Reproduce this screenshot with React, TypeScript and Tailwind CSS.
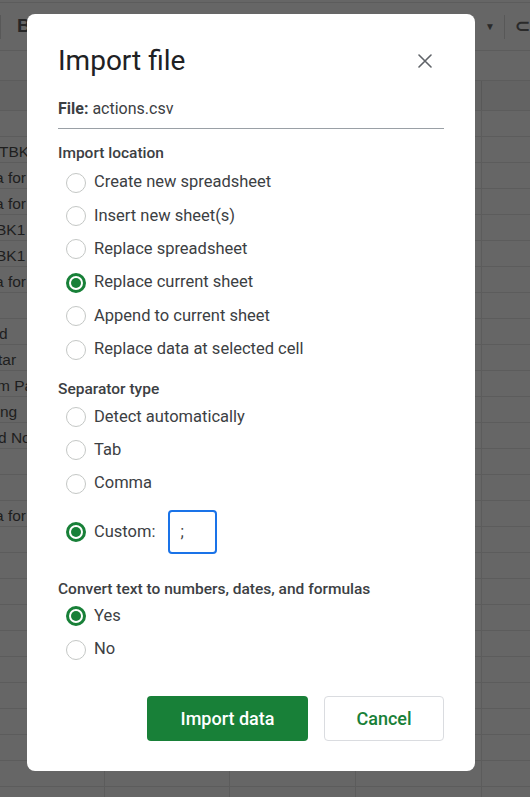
import React from 'react';

const cellRows: { text: string; shift: string }[] = [
  { text: '', shift: '' },
  { text: 'TBK3', shift: '-ml-[1px]' },
  { text: 'a for', shift: '-ml-[5px]' },
  { text: 'a for', shift: '-ml-[5px]' },
  { text: 'BK1', shift: '-ml-[4px]' },
  { text: 'BK1', shift: '-ml-[4px]' },
  { text: 'a for', shift: '-ml-[5px]' },
  { text: '', shift: '' },
  { text: 'd', shift: '-ml-[1px]' },
  { text: 'tar', shift: '-ml-[2px]' },
  { text: 'm Pa', shift: '-ml-[3px]' },
  { text: 'ng', shift: '' },
  { text: 'd No', shift: '-ml-[2px]' },
  { text: '', shift: '' },
  { text: '', shift: '' },
  { text: 'a for', shift: '-ml-[5px]' },
  { text: '', shift: '' },
  { text: '', shift: '' },
  { text: '', shift: '' },
  { text: '', shift: '' },
  { text: '', shift: '' },
  { text: '', shift: '' },
  { text: '', shift: '' },
  { text: '', shift: '' },
  { text: '', shift: '' },
  { text: '', shift: '' },
  { text: '', shift: '' },
];

function SheetBackground() {
  return (
    <div className="flex h-[797px] w-[530px] flex-col overflow-hidden bg-[#666666] font-['Liberation_Sans',Arial,sans-serif] text-[15.5px] text-[#1e1e1e]">
      {/* toolbar */}
      <div className="mt-[2px] flex h-[49px] shrink-0 items-center border-t border-b border-[#5c5c5c]">
        <div className="h-[24px] w-[1px] bg-[#585858]" />
        <span className="ml-[16px] text-[19px] font-bold text-[#262626]">B</span>
        <div className="flex-1" />
        <span className="mr-[2px] text-[16px] text-[#2a2a2a]">)</span>
        <span className="ml-[8px] text-[10px] text-[#2a2a2a]">▼</span>
        <div className="ml-[9px] h-[24px] w-[1px] bg-[#585858]" />
        <span className="ml-[10px] text-[18px] font-bold text-[#2a2a2a]">⊂</span>
      </div>
      {/* formula bar */}
      <div className="h-[30px] shrink-0 border-b border-[#5c5c5c]" />
      {/* column header */}
      <div className="flex h-[30px] shrink-0 border-b border-[#5c5c5c] bg-[#636363]">
        <div className="w-[482px] border-r border-[#585858]" />
      </div>
      {cellRows.map((r, i) => (
        <div key={i} className="flex h-[26px] shrink-0 border-b border-[#5c5c5c]">
          <div className="flex w-[105px] items-end overflow-hidden whitespace-nowrap border-r border-[#5c5c5c] pb-[1px] leading-[18px]">
            <span className={r.shift}>{r.text}</span>
          </div>
          <div className="w-[125px] border-r border-[#5c5c5c]" />
          <div className="w-[126px] border-r border-[#5c5c5c]" />
          <div className="w-[126px] border-r border-[#5c5c5c]" />
          <div className="flex-1" />
        </div>
      ))}
    </div>
  );
}

function Radio({ label, checked }: { label: string; checked?: boolean }) {
  return (
    <div className="flex h-[33.4px] items-center pl-[8px]">
      {checked ? (
        <div className="flex h-[20px] w-[20px] items-center justify-center rounded-full border-[3px] border-[#188038]">
          <div className="h-[10px] w-[10px] rounded-full bg-[#188038]" />
        </div>
      ) : (
        <div className="h-[20px] w-[20px] rounded-full border-[1.5px] border-[#c4c7c5]" />
      )}
      <span className="ml-[8px] text-[16.5px] text-[#3c4043]">{label}</span>
    </div>
  );
}

function Heading({ children, className = '' }: { children: React.ReactNode; className?: string }) {
  return <div className={`text-[15.5px] font-medium leading-[22px] text-[#3c4043] ${className}`}>{children}</div>;
}

export default function App() {
  return (
    <div className="relative h-[797px] w-[530px] overflow-hidden">
      <SheetBackground />

      <div className="absolute left-[27px] top-[14px] flex w-[448px] flex-col rounded-[8px] bg-white px-[31px] pt-[29px] pb-[30px] font-['Roboto',sans-serif]">
        <div className="flex h-[36px] items-center justify-between">
          <h2 className="text-[28px] font-normal leading-[36px] text-[#202124]">Import file</h2>
          <svg width="14" height="14" viewBox="0 0 14 14" className="mr-[12px]">
            <path d="M1 1L13 13M13 1L1 13" stroke="#5f6368" strokeWidth="1.6" strokeLinecap="round" />
          </svg>
        </div>

        <div className="mt-[18px] border-b border-[#9aa0a6] pb-[7px] text-[16px] leading-[24px] text-[#3c4043]">
          <span className="font-bold">File:</span> actions.csv
        </div>

        <Heading className="mt-[13px] h-[24px]">Import location</Heading>
        <div className="flex flex-col">
          <Radio label="Create new spreadsheet" />
          <Radio label="Insert new sheet(s)" />
          <Radio label="Replace spreadsheet" />
          <Radio label="Replace current sheet" checked />
          <Radio label="Append to current sheet" />
          <Radio label="Replace data at selected cell" />
        </div>

        <Heading className="mt-[12px] h-[22px]">Separator type</Heading>
        <div className="flex flex-col">
          <Radio label="Detect automatically" />
          <Radio label="Tab" />
          <Radio label="Comma" />
          <div className="mt-[9.5px] flex items-center pl-[8px]">
            <div className="flex h-[20px] w-[20px] items-center justify-center rounded-full border-[3px] border-[#188038]">
              <div className="h-[10px] w-[10px] rounded-full bg-[#188038]" />
            </div>
            <span className="ml-[8px] text-[16.5px] text-[#3c4043]">Custom:</span>
            <div className="ml-[13px] flex h-[44px] w-[49px] items-center rounded-[4px] border-2 border-[#1a73e8] pl-[10px] text-[16px] text-[#3c4043]">
              ;
            </div>
          </div>
        </div>

        <Heading className="mt-[23.5px] h-[22px]">Convert text to numbers, dates, and formulas</Heading>
        <div className="flex flex-col">
          <Radio label="Yes" checked />
          <Radio label="No" />
        </div>

        <div className="mt-[30px] flex justify-end gap-[16px]">
          <button className="flex h-[45px] w-[161px] items-center justify-center rounded-[4px] bg-[#188038] text-[18px] font-medium text-white">
            Import data
          </button>
          <button className="flex h-[45px] w-[120px] items-center justify-center rounded-[4px] border border-[#dadce0] bg-white text-[18px] font-medium text-[#188038]">
            Cancel
          </button>
        </div>
      </div>
    </div>
  );
}
